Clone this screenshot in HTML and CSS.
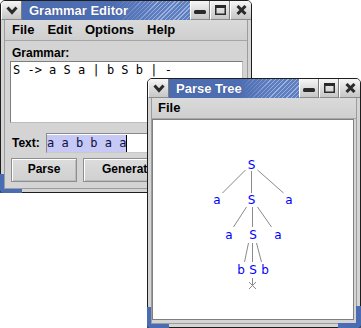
FILE: index.html
```html
<!DOCTYPE html>
<html>
<head>
<meta charset="utf-8">
<link rel="stylesheet" href="styles.css">
</head>
<body>
<div class="win ge">
  <div class="titlebar">
    <div class="tbtn chev"><svg width="12" height="9" viewBox="0 0 12 9"><polyline points="1.5,1.5 6,6.5 10.5,1.5" fill="none" stroke="#2a2a2a" stroke-width="3"/></svg></div>
    <div class="title">Grammar Editor</div>
    <div class="tbtn"><svg width="12" height="10" viewBox="0 0 12 10"><rect x="0" y="5" width="12" height="4" rx="1.5" fill="#2a2a2a"/></svg></div>
    <div class="tbtn"><svg width="11" height="10" viewBox="0 0 11 10"><rect x="0.75" y="0.75" width="9.5" height="8.5" fill="none" stroke="#2a2a2a" stroke-width="1.5"/><rect x="0" y="0" width="11" height="3" fill="#2a2a2a"/></svg></div>
    <div class="tbtn"><svg width="11" height="10" viewBox="0 0 11 10"><path d="M1.5 1 L9.5 9 M9.5 1 L1.5 9" stroke="#2a2a2a" stroke-width="3"/></svg></div>
  </div>
  <div class="frame">
    <div class="client">
      <div class="menubar"><span>File</span><span>Edit</span><span>Options</span><span>Help</span></div>
      <div class="content">
        <div class="label">Grammar:</div>
        <div class="textarea">S -&gt; a S a | b S b | -</div>
        <div class="textrow">
          <span class="tlabel">Text:</span>
          <div class="field"><span class="sel">a a b b a a</span><span class="caret"></span></div>
        </div>
        <div class="btnrow">
          <div class="btn parse">Parse</div>
          <div class="btn gen">Generate</div>
        </div>
      </div>
    </div>
  </div>
  <div class="corner bl"></div>
</div>

<div class="win pt">
  <div class="titlebar">
    <div class="tbtn chev"><svg width="12" height="9" viewBox="0 0 12 9"><polyline points="1.5,1.5 6,6.5 10.5,1.5" fill="none" stroke="#2a2a2a" stroke-width="3"/></svg></div>
    <div class="title">Parse Tree</div>
    <div class="tbtn"><svg width="12" height="10" viewBox="0 0 12 10"><rect x="0" y="5" width="12" height="4" rx="1.5" fill="#2a2a2a"/></svg></div>
    <div class="tbtn"><svg width="11" height="10" viewBox="0 0 11 10"><rect x="0.75" y="0.75" width="9.5" height="8.5" fill="none" stroke="#2a2a2a" stroke-width="1.5"/><rect x="0" y="0" width="11" height="3" fill="#2a2a2a"/></svg></div>
    <div class="tbtn"><svg width="11" height="10" viewBox="0 0 11 10"><path d="M1.5 1 L9.5 9 M9.5 1 L1.5 9" stroke="#2a2a2a" stroke-width="3"/></svg></div>
  </div>
  <div class="frame">
    <div class="client">
      <div class="menubar"><span>File</span></div>
      <div class="canvas">
        <svg class="tree" width="200" height="199" viewBox="153 120 200 199">
          <g stroke="#8a8a8a" stroke-width="1" fill="none">
            <line x1="245.5" y1="170" x2="222.5" y2="193"/>
            <line x1="251.5" y1="171" x2="251.5" y2="193"/>
            <line x1="257.5" y1="170" x2="283.5" y2="193"/>
            <line x1="246.5" y1="207" x2="233.5" y2="227"/>
            <line x1="252.5" y1="207" x2="252.5" y2="227"/>
            <line x1="257.5" y1="207" x2="271.5" y2="227"/>
            <line x1="248.5" y1="243" x2="244.5" y2="262"/>
            <line x1="252.5" y1="243" x2="252.5" y2="262"/>
            <line x1="256.5" y1="243" x2="261.5" y2="262"/>
            <line x1="252.5" y1="278" x2="252.5" y2="285"/>
            <line x1="249" y1="282" x2="256" y2="289"/>
            <line x1="256" y1="282" x2="249" y2="289"/>
          </g>
          <g class="nodes" fill="#0000ff" text-anchor="middle">
            <text x="251.5" y="169">S</text>
            <text x="217" y="204">a</text>
            <text x="251.5" y="204">S</text>
            <text x="289" y="204">a</text>
            <text x="229" y="239">a</text>
            <text x="253" y="239">S</text>
            <text x="278" y="239">a</text>
            <text x="241" y="274">b</text>
            <text x="253" y="274">S</text>
            <text x="265" y="274">b</text>
          </g>
        </svg>
      </div>
    </div>
  </div>
  <div class="corner bl"></div>
  <div class="corner br"></div>
</div>
</body>
</html>
```

FILE: styles.css
```css
html, body {
  margin: 0;
  padding: 0;
}
body {
  width: 361px;
  height: 328px;
  overflow: hidden;
  position: relative;
  background: #ffffff;
  font-family: "Liberation Sans", Arial, sans-serif;
  color: #000;
}
.win {
  position: absolute;
  box-sizing: border-box;
  border: 1px solid #1e1e1e;
  border-radius: 5px 5px 0 0;
  background: #d4d4d4;
  display: flex;
  flex-direction: column;
}
.ge { left: 0; top: 0; width: 252px; height: 193px; }
.pt { left: 147px; top: 78px; width: 214px; height: 250px; }

.titlebar {
  display: flex;
  height: 19px;
  flex: none;
  border-radius: 4px 4px 0 0;
  overflow: hidden;
}
.tbtn {
  width: 20px;
  flex: none;
  box-sizing: border-box;
  background: linear-gradient(#f6f6f6, #d8d8d8 60%, #c6c6c6);
  border-left: 1px solid #ffffff;
  border-right: 1px solid #7c7c7c;
  border-bottom: 1px solid #8c8c8c;
  display: flex;
  align-items: center;
  justify-content: center;
}
.tbtn:last-child { width: 21px; border-right: none; }
.tbtn.chev { width: 21px; }
.title {
  flex: 1;
  color: #ffffff;
  font-weight: bold;
  font-size: 13px;
  line-height: 19px;
  padding-left: 7px;
  white-space: nowrap;
  overflow: hidden;
  background:
    linear-gradient(to right, #4c6cb0 0%, #4e6eb3 55%, rgba(90,120,190,0) 80%),
    repeating-linear-gradient(135deg, #9cb2de 0 1px, #5f7ec0 1px 3px),
    #5f7ec0;
  text-shadow: 0 0 1px rgba(0,0,40,0.4);
}

.frame {
  flex: 1;
  display: flex;
  flex-direction: column;
  padding: 0 3px 3px;
  min-height: 0;
}
.client {
  flex: 1;
  display: flex;
  flex-direction: column;
  border: 1px solid #9c9c9c;
  border-top: none;
  min-height: 0;
}
.menubar {
  flex: none;
  height: 20px;
  line-height: 20px;
  border-bottom: 1px solid #a6a6a6;
  font-size: 13px;
  font-weight: bold;
  padding-left: 7px;
  display: flex;
  gap: 13px;
  background: linear-gradient(#dadada, #cfcfcf);
}
.pt .menubar { padding-left: 6px; }

.content {
  flex: 1;
  padding: 5px 4px 0 5px;
  display: flex;
  flex-direction: column;
}
.label {
  font-size: 12px;
  font-weight: bold;
  line-height: 14px;
  height: 14px;
  padding-left: 2px;
}
.textarea {
  margin-top: 1px;
  height: 62px;
  box-sizing: border-box;
  background: #ffffff;
  border: 1px solid #7e7e7e;
  border-right-color: #bdbdbd;
  border-bottom-color: #bdbdbd;
  padding: 1px 2px;
  font-family: "DejaVu Sans Mono", monospace;
  font-size: 12px;
  line-height: 14px;
  white-space: pre;
}
.textrow {
  margin-top: 10px;
  display: flex;
  align-items: center;
  height: 20px;
}
.tlabel {
  font-size: 12px;
  font-weight: bold;
  padding-left: 2px;
  width: 34px;
  flex: none;
}
.field {
  flex: 1;
  height: 20px;
  box-sizing: border-box;
  border: 1px solid #8a8a8a;
  border-right-color: #c8c8c8;
  border-bottom-color: #c8c8c8;
  background: #ffffff;
  display: flex;
  align-items: center;
  font-family: "DejaVu Sans Mono", monospace;
  font-size: 12px;
}
.sel {
  background: #c6c8f6;
  height: 17px;
  line-height: 17px;
  color: #101040;
  white-space: pre;
}
.caret {
  width: 1px;
  height: 17px;
  background: #000;
}
.btnrow {
  margin-top: 5px;
  display: flex;
  gap: 6px;
  padding-left: 1px;
}
.btn {
  box-sizing: border-box;
  height: 24px;
  line-height: 20px;
  border: 1px solid #8e8e8e;
  box-shadow: inset 1px 1px 0 #ffffff, inset -1px -1px 0 #bcbcbc;
  background: linear-gradient(#dcdcdc, #d0d0d0);
  font-size: 12px;
  font-weight: bold;
  text-align: center;
}
.parse { width: 66px; }
.gen { width: 110px; padding-left: 18px; text-align: left; }

.canvas {
  flex: 1;
  margin: 0 2px 3px 0;
  background: #ffffff;
  border: 1px solid #7f7f7f;
  min-height: 0;
  overflow: hidden;
}
.tree { display: block; }
.nodes {
  font-family: "DejaVu Sans", sans-serif;
  font-size: 12px;
}

.corner {
  position: absolute;
  width: 18px;
  height: 17px;
  border: 0 solid #4a6cb2;
}
.corner.bl {
  left: -1px;
  bottom: -1px;
  border-left-width: 4px;
  border-bottom-width: 4px;
  border-bottom-left-radius: 4px;
}
.corner.br {
  right: -1px;
  bottom: -1px;
  border-right-width: 5px;
  border-bottom-width: 5px;
  border-bottom-right-radius: 4px;
}
.ge .corner.bl { height: 15px; }
```
